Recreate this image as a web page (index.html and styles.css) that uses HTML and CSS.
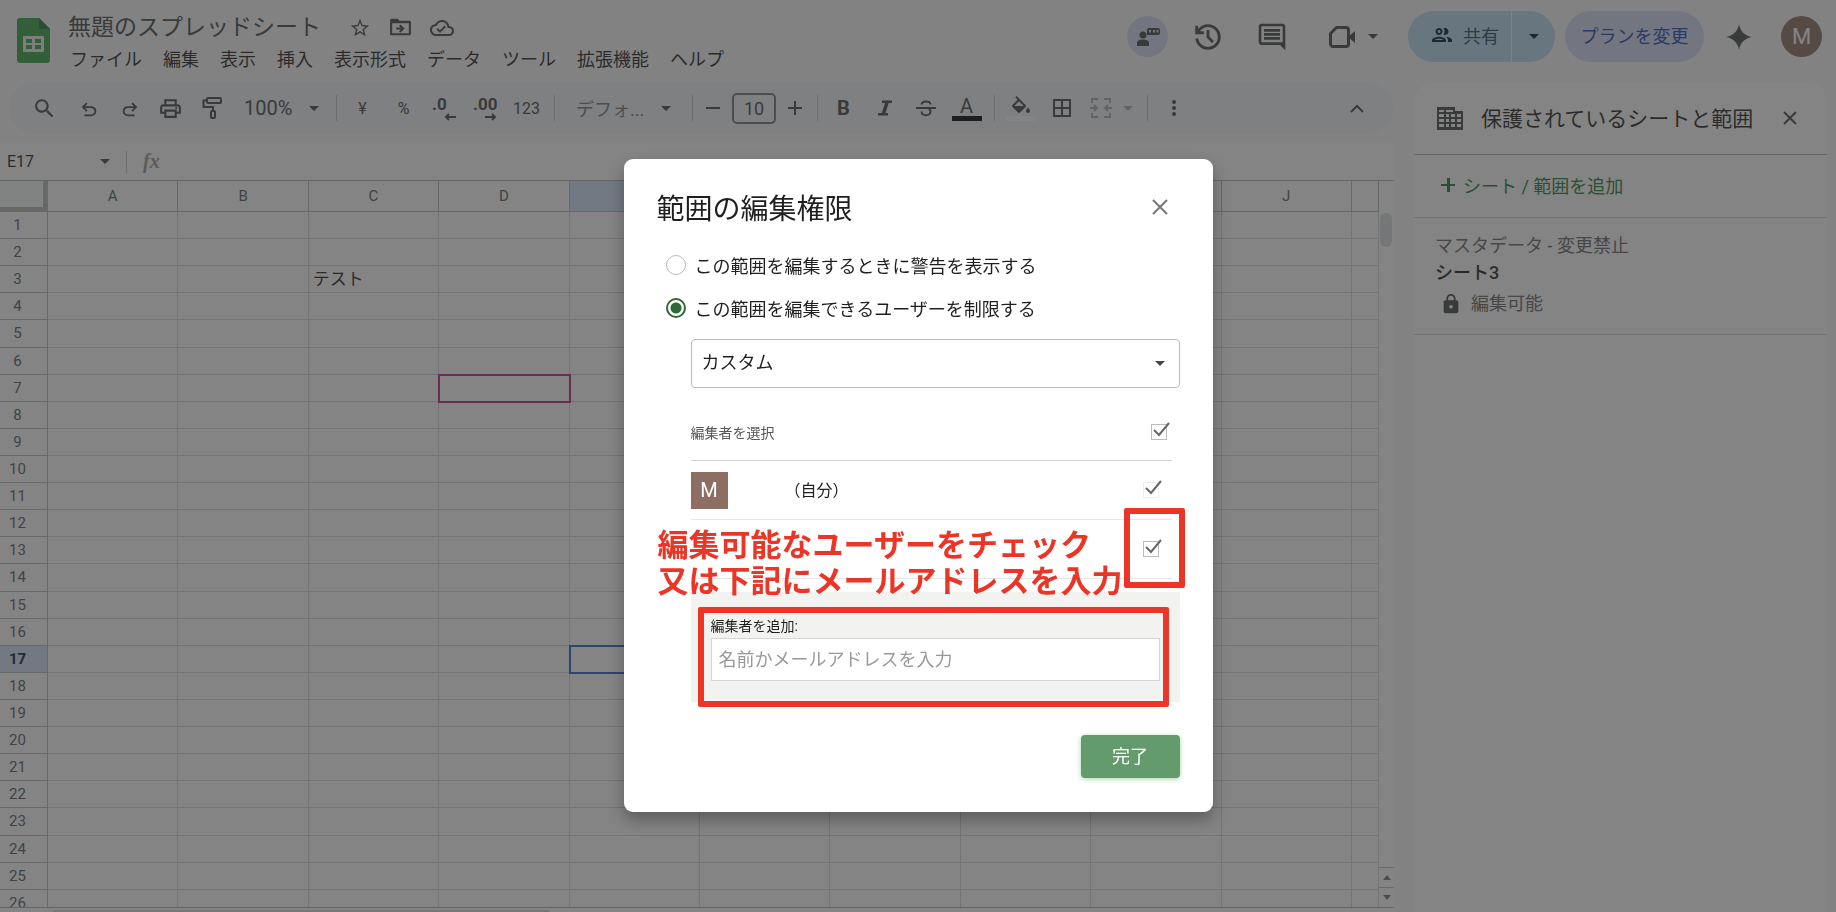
FILE: index.html
```html
<!DOCTYPE html>
<html lang="ja">
<head>
    <meta charset="UTF-8">
    <meta name="viewport" content="width=device-width, initial-scale=1.0">
    <title>無題のスプレッドシート</title>
    <link rel="stylesheet" href="styles.css">
</head>
<body>
    <div class="app">
        <header class="top">
            <a href="#" class="logo" aria-label="スプレッドシート ホーム">
                <svg width="33" height="45" viewBox="0 0 33 45">
                    <path d="M3 0h19l11 11v31a3 3 0 0 1-3 3H3a3 3 0 0 1-3-3V3a3 3 0 0 1 3-3z" fill="#34a043"/>
                    <path d="M22 0l11 11H22z" fill="#1b7a30"/>
                    <path d="M6 18h21v16H6zM9 21v4h6v-4zM18 21v4h6v-4zM9 27v4h6v-4zM18 27v4h6v-4z" fill="#f1f1f1" fill-rule="evenodd"/>
                </svg>
            </a>
            <div class="doc">
                <div class="doc-title">
                    <h1>無題のスプレッドシート</h1>
                    <button class="plain" aria-label="スター"><svg width="22" height="22" viewBox="0 0 24 24"><path d="M22 9.24l-7.19-.62L12 2 9.19 8.63 2 9.24l5.46 4.73L5.82 21 12 17.27 18.18 21l-1.63-7.03L22 9.24zM12 15.4l-3.76 2.27 1-4.28-3.32-2.88 4.38-.38L12 6.1l1.71 4.04 4.38.38-3.32 2.88 1 4.28L12 15.4z"/></svg></button>
                    <button class="plain" aria-label="移動"><svg width="25" height="25" viewBox="0 0 24 24"><path d="M20 5.500h-9l-1.500-2H3.500c-.9 0-1.500.6-1.500 1.500v13c0 .9.6 1.500 1.500 1.500H20.500c.9 0 1.500-.6 1.500-1.500V7c0-.9-.6-1.500-1.500-1.500zM20 17.500H4V8h16v9.500z"/><path d="M12.160 12H8v2h4.160l-1.590 1.590L11.990 17 16 13.010 11.990 9l-1.410 1.410z"/></svg></button>
                    <button class="plain" aria-label="保存済み"><svg width="24" height="24" viewBox="0 0 24 24"><path d="M19.350 10.040C18.670 6.590 15.640 4 12 4 9.110 4 6.600 5.640 5.350 8.040 2.340 8.360 0 10.910 0 14c0 3.310 2.690 6 6 6h13c2.760 0 5-2.240 5-5 0-2.640-2.050-4.780-4.650-4.960zM19 18H6c-2.210 0-4-1.790-4-4 0-2.050 1.530-3.760 3.560-3.970l1.070-.11.5-.95C8.080 7.140 9.940 6 12 6c2.620 0 4.880 1.860 5.390 4.430l.3 1.500 1.530.11c1.560.1 2.780 1.410 2.780 2.960 0 1.650-1.350 3-3 3zm-9-3.820l-2.090-2.090L6.500 13.500 10 17l6.010-6.010-1.410-1.410z"/></svg></button>
                </div>
                <nav class="menu">
                    <button>ファイル</button>
                    <button>編集</button>
                    <button>表示</button>
                    <button>挿入</button>
                    <button>表示形式</button>
                    <button>データ</button>
                    <button>ツール</button>
                    <button>拡張機能</button>
                    <button>ヘルプ</button>
                </nav>
            </div>
            <div class="actions">
                <button class="plain presence" aria-label="閲覧者">
                    <svg width="24" height="26" viewBox="0 0 24 26"><circle cx="7" cy="11" r="3.500"/><path d="M1 22v-3c0-2.500 3-3.500 6-3.500s6 1 6 3.500v3z"/><path d="M12 4h10a2 2 0 0 1 2 2v3a2 2 0 0 1-2 2H11V6z"/><path d="M13 6h2v2.500h-2zM17 6h2v2.500h-2zM20.500 6h2v2.500h-2z" fill="#d5dcf5"/></svg>
                </button>
                <button class="plain act" aria-label="変更履歴"><svg width="34" height="34" viewBox="0 0 24 24"><path d="M12 21q-3.450 0-6.012-2.287T3.050 13H5.100q.35 2.600 2.313 4.300T12 19q2.925 0 4.963-2.037T19 12t-2.037-4.962T12 5q-1.725 0-3.225.8T6.250 8H9v2H3V4h2v2.350q1.275-1.600 3.113-2.475T12 3q1.875 0 3.513.713t2.850 1.924 1.925 2.850T21 12t-.712 3.513-1.925 2.850-2.850 1.925T12 21m2.800-4.800L11 12.400V7h2v4.600l3.200 3.200z"/></svg></button>
                <button class="plain act" aria-label="コメント"><svg width="32" height="32" viewBox="0 0 24 24"><path d="M21.990 4c0-1.100-.89-2-1.990-2H4c-1.100 0-2 .9-2 2v12c0 1.100.9 2 2 2h14l4 4-.01-18zM20 4v12H4V4h16zM6 12h12v2H6zm0-3h12v2H6zm0-3h12v2H6z"/></svg></button>
                <button class="plain meet" aria-label="通話">
                    <svg width="28" height="24" viewBox="0 0 28 24"><path class="line" d="M8.500 2.500H18a2.500 2.500 0 0 1 2.500 2.500v14a2.500 2.500 0 0 1-2.500 2.500H5A2.500 2.500 0 0 1 2.500 19V8.500z"/><path d="M20 12l7-6v12z"/></svg>
                    <svg class="caret" viewBox="0 0 10 5"><path d="M0 0h10L5 5z"/></svg>
                </button>
                <div class="share">
                    <button class="share-main"><svg width="24" height="24" viewBox="0 0 24 24"><path d="M9 13.750c-2.340 0-7 1.170-7 3.500V19h14v-1.750c0-2.330-4.660-3.500-7-3.500zM4.340 17c.84-.58 2.870-1.250 4.660-1.250s3.820.67 4.660 1.250H4.340zM9 12c1.930 0 3.500-1.570 3.500-3.500S10.930 5 9 5 5.500 6.570 5.500 8.500 7.070 12 9 12zm0-5c.83 0 1.500.67 1.500 1.500S9.830 10 9 10s-1.500-.67-1.500-1.500S8.170 7 9 7zm7.040 6.810c1.160.84 1.960 1.960 1.960 3.440V19h4v-1.750c0-2.020-3.500-3.170-5.960-3.440zM15 12c1.930 0 3.500-1.570 3.500-3.500S16.930 5 15 5c-.54 0-1.040.13-1.500.35.63.89 1 1.980 1 3.150s-.37 2.260-1 3.150c.46.22.96.35 1.500.35z"/></svg>共有</button>
                    <button class="share-more" aria-label="共有オプション"><svg class="caret" viewBox="0 0 10 5"><path d="M0 0h10L5 5z"/></svg></button>
                </div>
                <button class="plan">プランを変更</button>
                <button class="plain spark" aria-label="Gemini"><svg width="26" height="26" viewBox="0 0 26 26"><path d="M13 0c1 7 6 12 13 13-7 1-12 6-13 13-1-7-6-12-13-13C7 12 12 7 13 0z"/></svg></button>
                <button class="avatar" aria-label="アカウント">M</button>
            </div>
        </header>

        <div class="work">
            <main class="sheet">
                <div class="toolbar">
                    <button class="tool first" aria-label="検索"><svg width="25" height="25" viewBox="0 0 24 24"><path d="M15.500 14h-.79l-.28-.27C15.410 12.590 16 11.110 16 9.500 16 5.910 13.090 3 9.500 3S3 5.910 3 9.500 5.910 16 9.500 16c1.610 0 3.090-.59 4.230-1.570l.27.28v.79l5 4.990L20.490 19l-4.990-5zm-6 0C7.010 14 5 11.990 5 9.500S7.010 5 9.500 5 14 7.010 14 9.500 11.990 14 9.500 14z"/></svg></button>
                    <button class="tool" aria-label="元に戻す"><svg width="22" height="22" viewBox="0 0 24 24"><path d="M7 21v-2h7.100q1.575 0 2.738-1T18 15.500q0-1.500-1.162-2.500T14.100 12H7.800l2.600 2.600L9 16 4 11l5-5 1.400 1.400L7.800 10h6.300q2.425 0 4.163 1.575T20 15.500q0 2.350-1.737 3.925T14.100 21H7z"/></svg></button>
                    <button class="tool" aria-label="やり直し"><svg width="22" height="22" viewBox="0 0 24 24"><path transform="matrix(-1 0 0 1 24 0)" d="M7 21v-2h7.100q1.575 0 2.738-1T18 15.500q0-1.500-1.162-2.500T14.100 12H7.800l2.600 2.600L9 16 4 11l5-5 1.400 1.400L7.800 10h6.300q2.425 0 4.163 1.575T20 15.500q0 2.350-1.737 3.925T14.100 21H7z"/></svg></button>
                    <button class="tool" aria-label="印刷"><svg width="25" height="25" viewBox="0 0 24 24"><path d="M19 8h-1V3H6v5H5c-1.660 0-3 1.340-3 3v6h4v4h12v-4h4v-6c0-1.660-1.340-3-3-3zM8 5h8v3H8V5zm8 12v2H8v-4h8v2zm2-2v-2H6v2H4v-4c0-.55.45-1 1-1h14c.55 0 1 .45 1 1v4h-2z"/><circle cx="17.500" cy="11.500" r="1"/></svg></button>
                    <button class="tool" aria-label="書式を貼り付け"><svg class="line" width="22" height="24" viewBox="0 0 22 24"><rect x="6" y="2" width="14" height="5" rx="1"/><path d="M6 4.500H2.500V11H12v4"/><rect x="10" y="15" width="4" height="7" rx="1"/></svg></button>
                    <button class="tool zoom">100%<svg class="caret" viewBox="0 0 10 5"><path d="M0 0h10L5 5z"/></svg></button>
                    <span class="sep"></span>
                    <button class="tool small">¥</button>
                    <button class="tool small">%</button>
                    <button class="tool decimal"><span>.0</span><svg class="line" width="12" height="8" viewBox="0 0 12 8"><path d="M12 4H2M5 1L2 4l3 3"/></svg></button>
                    <button class="tool decimal"><span>.00</span><svg class="line" width="12" height="8" viewBox="0 0 12 8"><path d="M0 4h10M7 1l3 3-3 3"/></svg></button>
                    <button class="tool small">123</button>
                    <span class="sep"></span>
                    <button class="tool font">デフォ...<svg class="caret" viewBox="0 0 10 5"><path d="M0 0h10L5 5z"/></svg></button>
                    <span class="sep"></span>
                    <button class="tool step" aria-label="小さく"><svg width="14" height="14" viewBox="0 0 14 14"><path d="M0 6h14v2H0z"/></svg></button>
                    <input class="size" type="text" value="10" aria-label="フォントサイズ">
                    <button class="tool step" aria-label="大きく"><svg width="14" height="14" viewBox="0 0 14 14"><path d="M6 0h2v6h6v2H8v6H6V8H0V6h6z"/></svg></button>
                    <span class="sep"></span>
                    <button class="tool bold">B</button>
                    <button class="tool" aria-label="斜体"><svg width="24" height="24" viewBox="0 0 24 24"><path d="M9 4.500h10V7h-3.300l-3.200 10H15v2.500H5V17h3.800L12 7H9z"/></svg></button>
                    <button class="tool" aria-label="取り消し線"><svg class="line" width="24" height="24" viewBox="0 0 24 24"><path d="M2 12h20M16.500 8.500C16 4.500 8 4.500 7.500 8.500M7.500 15.500c.5 5 8.500 5 9 0 0-1-.5-2-1.500-3"/></svg></button>
                    <button class="tool colour"><span>A</span><i></i></button>
                    <span class="sep"></span>
                    <button class="tool colour white" aria-label="塗りつぶしの色"><svg width="20" height="20" viewBox="2 0 20 20"><path d="M16.560 8.940L7.620 0 6.210 1.410l2.380 2.380-5.150 5.150c-.59.59-.59 1.540 0 2.120l5.500 5.500c.29.29.68.44 1.060.44s.77-.15 1.060-.44l5.500-5.500c.59-.58.59-1.530 0-2.120zM5.210 10L10 5.210 14.790 10H5.210zM19 11.500s-2 2.170-2 3.500c0 1.100.9 2 2 2s2-.9 2-2c0-1.330-2-3.500-2-3.500z"/></svg><i></i></button>
                    <button class="tool" aria-label="枠線"><svg class="line" width="20" height="20" viewBox="0 0 20 20"><path d="M2 2h16v16H2zM10 2v16M2 10h16"/></svg></button>
                    <button class="tool merge" aria-label="セルを結合" disabled><svg class="line" width="22" height="20" viewBox="0 0 22 20"><path d="M8 1H2v4M2 15v4h6M14 1h6v4M20 15v4h-6M0 10h7M4 7l3 3-3 3M22 10h-7M18 7l-3 3 3 3"/></svg><svg class="caret" viewBox="0 0 10 5"><path d="M0 0h10L5 5z"/></svg></button>
                    <span class="sep"></span>
                    <button class="tool" aria-label="その他"><svg width="6" height="18" viewBox="0 0 6 18"><circle cx="3" cy="3" r="2"/><circle cx="3" cy="9" r="2"/><circle cx="3" cy="15" r="2"/></svg></button>
                    <button class="tool last" aria-label="メニューを隠す"><svg class="line" width="14" height="9" viewBox="0 0 14 9"><path d="M1 8l6-6 6 6"/></svg></button>
                </div>

                <div class="formula">
                    <input class="cell-name" type="text" value="E17" aria-label="セル">
                    <svg class="caret" viewBox="0 0 10 5"><path d="M0 0h10L5 5z"/></svg>
                    <span class="bar"></span>
                    <span class="fx">fx</span>
                </div>

                <div class="grid-wrap">
                    <div class="grid-view">
                        <table class="grid" id="grid"></table>
                    </div>
                    <div class="scroll">
                        <span class="scroll-thumb"></span>
                        <button class="scroll-btn" aria-label="上へ"><svg width="8" height="5" viewBox="0 0 8 5"><path d="M0 5h8L4 0z"/></svg></button>
                        <button class="scroll-btn" aria-label="下へ"><svg width="8" height="5" viewBox="0 0 8 5"><path d="M0 0h8L4 5z"/></svg></button>
                    </div>
                </div>
                <div class="hscroll"><span></span></div>
            </main>

            <aside class="panel">
                <div class="panel-head">
                    <svg width="26" height="23" viewBox="0 0 26 23"><path fill-rule="evenodd" d="M0 0h18v4h8v19H0zM2 3v2h5V3zM9 3v2h7V3zM2 7v3h5V7zM9 7v3h3V7zM14 7v3h4V7zM20 7v3h4V7zM2 12v3h5v-3zM9 12v3h3v-3zM14 12v3h4v-3zM20 12v3h4v-3zM2 17v3h5v-3zM9 17v3h3v-3zM14 17v3h4v-3zM20 17v3h4v-3z"/></svg>
                    <h2>保護されているシートと範囲</h2>
                    <button class="plain" aria-label="閉じる"><svg class="line" width="14" height="14" viewBox="0 0 14 14"><path d="M1 1l12 12M13 1L1 13"/></svg></button>
                </div>
                <button class="panel-add"><svg width="14" height="14" viewBox="0 0 14 14"><path d="M6 0h3v6h5v2H9v6H6V8H0V6h6z"/></svg>シート / 範囲を追加</button>
                <div class="panel-item">
                    <p class="muted">マスタデータ - 変更禁止</p>
                    <p class="strong">シート3</p>
                    <p class="muted lock"><svg width="22" height="22" viewBox="0 0 24 24"><path d="M18 8h-1V6c0-2.760-2.240-5-5-5S7 3.240 7 6v2H6c-1.100 0-2 .9-2 2v10c0 1.100.9 2 2 2h12c1.100 0 2-.9 2-2V10c0-1.100-.9-2-2-2zm-6 9c-1.100 0-2-.9-2-2s.9-2 2-2 2 .9 2 2-.9 2-2 2zm3.100-9H8.900V6c0-1.710 1.390-3.100 3.100-3.100 1.710 0 3.100 1.390 3.100 3.100v2z"/></svg>編集可能</p>
                </div>
            </aside>
        </div>
    </div>

    <!-- Permission dialog -->
    <div class="overlay">
        <div class="dialog" role="dialog" aria-labelledby="dialogTitle">
            <div class="dialog-head">
                <h2 id="dialogTitle">範囲の編集権限</h2>
                <button class="plain" aria-label="閉じる"><svg class="line" width="16" height="16" viewBox="0 0 16 16"><path d="M1 1l14 14M15 1L1 15"/></svg></button>
            </div>

            <label class="radio"><input type="radio" name="mode">この範囲を編集するときに警告を表示する</label>
            <label class="radio"><input type="radio" name="mode" checked>この範囲を編集できるユーザーを制限する</label>

            <div class="dialog-body">
                <div class="select">
                    <select aria-label="編集できるユーザー">
                        <option>カスタム</option>
                    </select>
                    <svg class="caret" viewBox="0 0 10 5"><path d="M0 0h10L5 5z"/></svg>
                </div>

                <div class="editors">
                    <div class="editor editor-head">
                        <label for="all">編集者を選択</label>
                        <span class="check"><input type="checkbox" id="all" checked><svg viewBox="0 0 20 18"><path d="M3 9l5 5L18 2" /></svg></span>
                    </div>
                    <div class="editor">
                        <span class="editor-pic">M</span>
                        <label for="me">（自分）</label>
                        <span class="check locked"><input type="checkbox" id="me" checked disabled><svg viewBox="0 0 20 18"><path d="M3 9l5 5L18 2" /></svg></span>
                    </div>
                    <div class="editor">
                        <span class="check"><input type="checkbox" aria-label="ユーザー" checked><svg viewBox="0 0 20 18"><path d="M3 9l5 5L18 2" /></svg></span>
                        <span class="mark mark-check"></span>
                    </div>
                    <p class="note">編集可能なユーザーをチェック<br>又は下記にメールアドレスを入力</p>
                </div>

                <div class="add-editor">
                    <label for="addEditor">編集者を追加:</label>
                    <input type="text" id="addEditor" placeholder="名前かメールアドレスを入力">
                    <span class="mark mark-add"></span>
                </div>
            </div>

            <div class="dialog-foot">
                <button class="done">完了</button>
            </div>
        </div>
    </div>

    <script src="script.js"></script>
</body>
</html>
```
FILE: styles.css
```css
* {
    box-sizing: border-box;
}

body {
    margin: 0;
    font-family: Roboto, "Noto Sans CJK JP", sans-serif;
    font-size: 18px;
    color: #1f1f1f;
    overflow: hidden;
}

h1, h2, p {
    margin: 0;
    font-weight: normal;
}

button, input, select {
    font: inherit;
    color: inherit;
}

button {
    border: none;
    background: none;
    padding: 0;
    cursor: pointer;
}

svg {
    display: block;
    flex: none;
    fill: #444746;
}

.line {
    fill: none;
    stroke: #444746;
    stroke-width: 2;
}

.plain {
    display: flex;
    align-items: center;
    justify-content: center;
}

.caret {
    width: 10px;
    height: 5px;
}

.app {
    display: flex;
    flex-direction: column;
    height: 100vh;
    background: #f9fbfd;
}

/* Header */
.top {
    display: flex;
    height: 82px;
    flex: none;
    padding-right: 14px;
}

.logo {
    padding: 18px 18px 0 17px;
}

.doc {
    padding-top: 9px;
}

.doc-title {
    display: flex;
    align-items: center;
    height: 37px;
    gap: 17px;
}

.doc-title h1 {
    font-size: 23px;
    line-height: 36px;
    color: #444746;
    padding-right: 11px;
}

.menu {
    display: flex;
    gap: 21px;
    padding-left: 2px;
}

.menu button {
    line-height: 28px;
}

.actions {
    display: flex;
    align-items: center;
    height: 73px;
    margin-left: auto;
}

.presence {
    width: 41px;
    height: 41px;
    border-radius: 50%;
    background: #d5dcf5;
}

.act {
    width: 64px;
}

.presence + .act {
    margin-left: 8px;
}

.meet {
    gap: 12px;
    margin: 0 30px 0 24px;
}

.meet .line {
    stroke-width: 3;
}

.share {
    display: flex;
    height: 51px;
    gap: 1px;
    margin-right: 10px;
}

.share button {
    display: flex;
    align-items: center;
    background: #b8dcf4;
    color: #2b4a63;
}

.share svg {
    fill: #001d35;
}

.share .share-main {
    gap: 9px;
    width: 103px;
    padding: 0 0 3px 22px;
    border-radius: 26px 0 0 26px;
}

.share .share-more {
    width: 43px;
    justify-content: center;
    border-radius: 0 26px 26px 0;
}

.plan {
    width: 139px;
    height: 51px;
    padding-bottom: 3px;
    border-radius: 26px;
    background: #d5dcf5;
    color: #1a49b0;
}

.spark {
    margin: 0 29px 0 22px;
}

.avatar {
    width: 41px;
    height: 41px;
    border-radius: 50%;
    background: #8d6e63;
    color: #fff;
    font-size: 22px;
}

/* Work area */
.work {
    display: flex;
    flex: 1;
    min-height: 0;
    gap: 20px;
    padding-right: 9px;
}

.sheet {
    display: flex;
    flex-direction: column;
    flex: 1;
    min-width: 0;
}

.toolbar {
    display: flex;
    align-items: center;
    height: 52px;
    flex: none;
    margin: 0 1px 9px 9px;
    padding: 0 16px 0 15px;
    border-radius: 26px;
    background: #f0f4f9;
    color: #444746;
}

.tool {
    display: flex;
    align-items: center;
    justify-content: center;
    width: 41px;
    height: 40px;
}

.first {
    margin-right: 3px;
}

.zoom {
    justify-content: space-between;
    width: 97px;
    padding: 0 10px 0 12px;
    font-size: 20px;
}

.small {
    font-size: 16px;
}

.decimal {
    flex-direction: column;
    align-items: flex-start;
    padding-left: 8px;
    font-size: 17px;
    font-weight: bold;
    line-height: 18px;
}

.decimal svg {
    margin-left: 12px;
}

.font {
    justify-content: space-between;
    width: 125px;
    padding: 0 14px 0 16px;
    color: #777;
}

.step {
    width: 30px;
}

.size {
    width: 44px;
    height: 31px;
    margin: 0 4px;
    padding: 0;
    border: 2px solid #747775;
    border-radius: 5px;
    background: none;
    text-align: center;
}

.bold {
    font-size: 20px;
    font-weight: bold;
}

.colour {
    flex-direction: column;
    font-size: 20px;
    line-height: 20px;
}

.colour i {
    width: 30px;
    height: 5px;
    background: #000;
}

.white i {
    background: #fff;
}

.merge {
    width: 58px;
    gap: 11px;
    opacity: 0.4;
}

.last {
    margin-left: auto;
}

.sep {
    width: 1px;
    height: 26px;
    margin: 0 5px 0 7px;
    background: #c7c7c7;
}

.formula {
    display: flex;
    align-items: center;
    height: 37px;
    flex: none;
    background: #fff;
}

.cell-name {
    width: 100px;
    padding: 0 0 0 7px;
    border: none;
    background: none;
    font-size: 16px;
}

.bar {
    width: 1px;
    height: 22px;
    margin: 0 16px;
    background: #c7c7c7;
}

.fx {
    font-family: "Liberation Serif", serif;
    font-style: italic;
    font-weight: bold;
    font-size: 20px;
    color: #999;
}

/* Grid */
.grid-wrap {
    display: flex;
    flex: 1;
    min-height: 0;
    background: #fff;
    border-top: 1px solid #b0b0b0;
    border-bottom: 1px solid #b0b0b0;
}

.grid-view {
    flex: 1;
    min-width: 0;
    overflow: hidden;
}

.grid {
    width: 100%;
    height: 736px;
    table-layout: fixed;
    border-collapse: separate;
    border-spacing: 0;
}

.grid th, .grid td {
    height: 27px;
    padding: 0;
    border-right: 1px solid #d8d8d8;
    border-bottom: 1px solid #d8d8d8;
    white-space: nowrap;
}

.grid td {
    padding-left: 4px;
    font-size: 17px;
    line-height: 24px;
}

.grid th {
    border-color: #b8b8b8;
    color: #575b5f;
    font-size: 15px;
    line-height: 20px;
    font-weight: normal;
}

.grid thead th {
    height: 31px;
}

.grid tbody th {
    padding-right: 12px;
}

.grid .corner {
    width: 48px;
    background: #f8f9fa;
    border-right: 5px solid #b8b8b8;
    border-bottom: 5px solid #b8b8b8;
}

.grid .tail {
    width: 27px;
}

.grid .on {
    background: #d3e3fd;
}

.grid tbody .on {
    color: #041e49;
    font-weight: bold;
}

.grid .other {
    outline: 2px solid #c2257b;
    outline-offset: -1px;
}

.grid .current {
    outline: 2px solid #2a62d0;
    outline-offset: -1px;
}

.scroll {
    display: flex;
    flex-direction: column;
    width: 15px;
}

.scroll-thumb {
    height: 34px;
    margin: 32px 2px auto 1px;
    border-radius: 6px;
    background: #dadce0;
}

.scroll-btn {
    display: flex;
    align-items: center;
    justify-content: center;
    height: 20px;
    border-top: 1px solid #bdbdbd;
}

.scroll-btn svg {
    fill: #777;
}

.hscroll {
    height: 4px;
    padding: 2px 0 0 53px;
    background: #fff;
}

.hscroll span {
    display: block;
    width: 37%;
    height: 2px;
    background: #dadce0;
}

/* Side panel */
.panel {
    width: 413px;
    flex: none;
    border-radius: 20px 20px 0 0;
    background: #fff;
}

.panel-head {
    display: flex;
    align-items: center;
    height: 73px;
    padding: 0 30px 0 23px;
    border-bottom: 1px solid #b0b0b0;
}

.panel-head h2 {
    flex: 1;
    padding: 0 0 3px 18px;
    font-size: 21px;
}

.panel-add {
    display: flex;
    align-items: center;
    gap: 8px;
    width: 100%;
    height: 63px;
    padding: 0 0 2px 27px;
    border-bottom: 1px solid #d0d0d0;
    color: #188038;
}

.panel-add svg {
    fill: #188038;
}

.panel-item {
    height: 117px;
    padding: 14px 21px 0;
    border-bottom: 1px solid #d0d0d0;
    line-height: 27px;
}

.muted {
    color: #666;
}

.strong {
    font-weight: 500;
}

.lock {
    display: flex;
    align-items: center;
    gap: 9px;
    padding: 4px 0 0 5px;
}

/* Dialog */
.overlay {
    position: fixed;
    inset: 0;
    display: flex;
    align-items: flex-start;
    justify-content: center;
    padding-top: 159px;
    background: rgba(50, 50, 50, 0.6);
}

.dialog {
    width: 589px;
    padding: 22px 33px 34px;
    border-radius: 9px;
    background: #fff;
    box-shadow: 0 8px 16px rgba(0, 0, 0, 0.3);
}

.dialog-head {
    display: flex;
    align-items: center;
    justify-content: space-between;
    height: 52px;
    margin-bottom: 10px;
    padding-right: 12px;
}

.dialog-head h2 {
    font-size: 28px;
}

.dialog-head .line {
    stroke: #777;
}

.radio {
    display: flex;
    align-items: center;
    gap: 9px;
    height: 43px;
    padding-left: 9px;
}

.radio input {
    appearance: none;
    width: 20px;
    height: 20px;
    margin: 0;
    border: 1px solid #bbb;
    border-radius: 50%;
}

.radio input:checked {
    border: 2px solid #2e6b34;
    background: radial-gradient(#2e6b34 5px, #fff 6px);
}

.dialog-body {
    margin: 10px 0 0 34px;
}

.select {
    display: flex;
    align-items: center;
    position: relative;
}

.select select {
    appearance: none;
    width: 100%;
    height: 49px;
    padding: 0 10px 2px;
    border: 1px solid #bbb;
    border-radius: 4px;
    background: #fff;
}

.select .caret {
    position: absolute;
    right: 15px;
    pointer-events: none;
}

.editors {
    position: relative;
    z-index: 1;
    margin: 15px 8px 13px 0;
}

.editor {
    display: flex;
    align-items: center;
    position: relative;
    height: 59px;
    padding-right: 13px;
    border-bottom: 1px solid #e6e6e6;
    font-size: 16px;
}

.editor label {
    padding-bottom: 3px;
}

.editor-head {
    height: 58px;
    padding-right: 5px;
    border-color: #d5d5d5;
    font-size: 14px;
    color: #555;
}

.editor-head label {
    padding-bottom: 0;
}

.editor-pic {
    width: 37px;
    height: 37px;
    margin-right: 57px;
    background: #8d6e63;
    color: #fff;
    font-size: 20px;
    line-height: 37px;
    text-align: center;
}

.check {
    position: relative;
    margin-left: auto;
}

.check input {
    display: block;
    appearance: none;
    width: 16px;
    height: 16px;
    margin: 0;
    border: 1px solid #bbb;
}

.locked input {
    border-color: #eee;
}

.check svg {
    position: absolute;
    left: 0;
    bottom: 1px;
    width: 20px;
    height: 18px;
    fill: none;
    stroke: #666;
    stroke-width: 2;
    pointer-events: none;
}

.add-editor {
    position: relative;
    height: 110px;
    padding: 22px 20px 0;
    background: #f2f2f1;
}

.add-editor label {
    display: block;
    font-size: 14px;
    line-height: 24px;
}

.add-editor input {
    display: block;
    width: 100%;
    height: 43px;
    padding: 0 7px;
    border: 1px solid #d5d5d5;
    background: #fff;
}

.add-editor input::placeholder {
    color: #999;
}

.dialog-foot {
    display: flex;
    justify-content: flex-end;
    margin-top: 33px;
}

.done {
    width: 99px;
    height: 43px;
    padding-bottom: 3px;
    border-radius: 4px;
    background: #649b6c;
    color: #fff;
    box-shadow: 0 1px 5px #a5d6a7;
}

/* Red notes */
.note {
    position: absolute;
    left: -33px;
    top: 125px;
    color: #eb3527;
    font-size: 31px;
    font-weight: bold;
    line-height: 36px;
    white-space: nowrap;
}

.mark {
    position: absolute;
    border: 6px solid #eb3527;
    border-radius: 2px;
    pointer-events: none;
}

.mark-check {
    top: -12px;
    right: -13px;
    width: 61px;
    height: 80px;
}

.mark-add {
    top: 15px;
    left: 7px;
    right: 11px;
    height: 100px;
}
```
FILE: script.js
```javascript
const grid = document.getElementById('grid');
const columns = 'ABCDEFGHIJ'.split('');
const values = { C3: 'テスト' };
const marks = { D7: 'other', E17: 'current' };

let html = '<thead><tr><th class="corner"></th>';
columns.forEach(c => {
    html += `<th class="${c === 'E' ? 'on' : ''}">${c}</th>`;
});
html += '<th class="tail"></th></tr></thead><tbody>';

for (let row = 1; row <= 26; row++) {
    html += `<tr><th class="${row === 17 ? 'on' : ''}">${row}</th>`;
    columns.forEach(c => {
        const id = c + row;
        html += `<td class="${marks[id] || ''}">${values[id] || ''}</td>`;
    });
    html += '<td></td></tr>';
}

grid.innerHTML = html + '</tbody>';
```
